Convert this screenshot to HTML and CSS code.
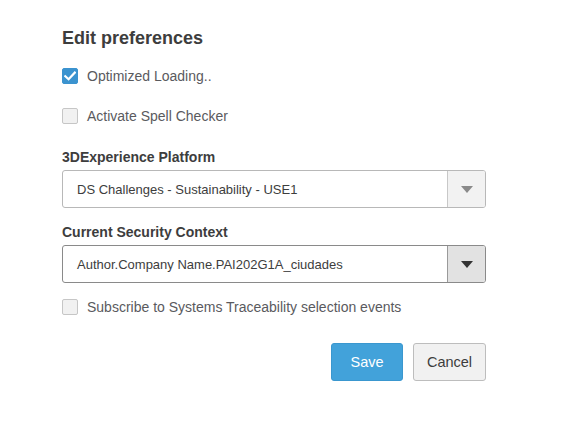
FILE: index.html
```html
<!DOCTYPE html>
<html>
<head>
<meta charset="utf-8">
<link rel="stylesheet" href="styles.css">
</head>
<body>
<div class="panel">
  <h1 class="title">Edit preferences</h1>
  <label class="check-row first">
    <span class="box checked"><svg width="12" height="10" viewBox="0 0 12 10"><path d="M1.3 5.2 L4.6 8.3 L10.8 1.6" fill="none" stroke="#fff" stroke-width="2.2" stroke-linecap="square"/></svg></span>
    <span class="check-label">Optimized Loading..</span>
  </label>
  <label class="check-row second">
    <span class="box"></span>
    <span class="check-label">Activate Spell Checker</span>
  </label>
  <div class="field-label first-label">3DExperience Platform</div>
  <div class="select">
    <span class="select-value">DS Challenges - Sustainability - USE1</span>
    <span class="select-arrow"><span class="tri"></span></span>
  </div>
  <div class="field-label second-label">Current Security Context</div>
  <div class="select active">
    <span class="select-value">Author.Company Name.PAI202G1A_ciudades</span>
    <span class="select-arrow"><span class="tri"></span></span>
  </div>
  <label class="check-row third">
    <span class="box"></span>
    <span class="check-label">Subscribe to Systems Traceability selection events</span>
  </label>
  <div class="actions">
    <button class="btn primary">Save</button>
    <button class="btn">Cancel</button>
  </div>
</div>
</body>
</html>
```
FILE: styles.css
```css
html, body {
  margin: 0;
  padding: 0;
  background: #fff;
}
body {
  font-family: "Liberation Sans", Arial, sans-serif;
  width: 561px;
  height: 438px;
  overflow: hidden;
}
.panel {
  display: flex;
  flex-direction: column;
  padding: 28px 0 0 62px;
  width: 424px;
}
.title {
  margin: 0;
  font-size: 18px;
  line-height: 20px;
  font-weight: bold;
  color: #3d3d3d;
}
.check-row {
  display: flex;
  align-items: center;
  gap: 9px;
  height: 16px;
}
.check-row.first { margin-top: 20px; }
.check-row.second { margin-top: 24px; }
.check-row.third { margin-top: 16px; }
.box {
  width: 14px;
  height: 14px;
  border: 1px solid #c6c6c6;
  background: #f1f1f1;
  border-radius: 2px;
  display: flex;
  align-items: center;
  justify-content: center;
  flex: none;
}
.box.checked {
  background: #3b93cf;
  border-color: #3b93cf;
}
.check-label {
  font-size: 14px;
  color: #5a5a5e;
  line-height: 16px;
}
.field-label {
  font-size: 14px;
  font-weight: bold;
  color: #3d3d3d;
  line-height: 16px;
}
.first-label { margin-top: 25px; }
.second-label { margin-top: 16px; }
.select {
  margin-top: 5px;
  display: flex;
  height: 36px;
  border: 1px solid #b8b8b8;
  border-radius: 3px;
  overflow: hidden;
}
.select-value {
  flex: 1;
  display: flex;
  align-items: center;
  padding-left: 14px;
  font-size: 13px;
  color: #3d3d3d;
}
.select-arrow {
  width: 37px;
  border-left: 1px solid #c8c8c8;
  background: #f2f2f2;
  display: flex;
  align-items: center;
  justify-content: center;
}
.tri {
  width: 0;
  height: 0;
  border-left: 6px solid transparent;
  border-right: 6px solid transparent;
  border-top: 7px solid #8a8a8a;
}
.select.active {
  border-color: #8a8a8a;
}
.select.active .select-arrow {
  background: #e2e2e2;
  border-left-color: #9a9a9a;
}
.select.active .tri {
  border-top-color: #333;
}
.actions {
  display: flex;
  justify-content: flex-end;
  gap: 10px;
  margin-top: 28px;
}
.btn {
  width: 73px;
  height: 38px;
  border: 1px solid #bdbdbd;
  border-radius: 3px;
  background: #f1f1f1;
  color: #3d3d3d;
  font-family: "Liberation Sans", Arial, sans-serif;
  font-size: 14.5px;
  padding: 0;
}
.btn.primary {
  width: 72px;
  background: #42a2da;
  border-color: #3a97cf;
  color: #fff;
}
```
